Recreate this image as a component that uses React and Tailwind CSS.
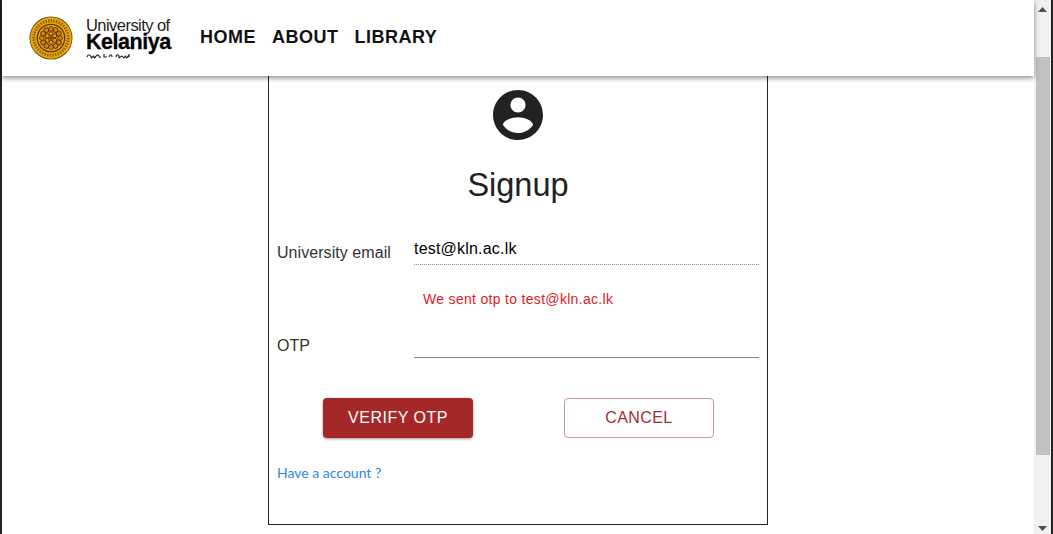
import React from 'react'

const Seal = () => (
  <svg width="44" height="44" viewBox="0 0 46 46">
    <circle cx="23" cy="23" r="22.5" fill="#6b4a08" />
    <circle cx="23" cy="23" r="21.6" fill="#e6a90f" />
    <circle cx="23" cy="23" r="18" fill="none" stroke="#8a5a08" strokeWidth="3.2" strokeDasharray="1.4 1.4" />
    <circle cx="23" cy="23" r="15" fill="#6e3208" />
    <circle cx="23" cy="23" r="13.6" fill="#e8ac18" />
    {[0, 30, 60, 90, 120, 150, 180, 210, 240, 270, 300, 330].map((a) => (
      <circle key={a} cx="23" cy="13.5" r="2.5" fill="#c9861a" stroke="#6e3208" strokeWidth="1" transform={`rotate(${a} 23 23)`} />
    ))}
    {[0, 60, 120, 180, 240, 300].map((a) => (
      <circle key={a} cx="23" cy="18.5" r="2" fill="#e8ac18" stroke="#6e3208" strokeWidth="1" transform={`rotate(${a} 23 23)`} />
    ))}
    <circle cx="23" cy="23" r="2.2" fill="#8a4a0c" />
  </svg>
)

const Logo = () => (
  <div className="flex items-center gap-[13px]">
    <Seal />
    <div className="flex flex-col w-[86px]">
      <span className="text-[16.5px] leading-[16px] tracking-[-0.55px] font-light text-[#222]">University of</span>
      <span className="text-[21.5px] leading-[18px] font-bold tracking-[-0.45px] text-black [-webkit-text-stroke:0.3px_black]">Kelaniya</span>
      {/* tiny script under the wordmark, part of the logo */}
      <svg width="48" height="7" viewBox="0 0 48 7" className="mt-[1px]">
        <path d="M1 5c1-3 3-3 4 0s2-3 3 0 2-3 4-2 1 3 3 2M18 2v3h3M23 5c1-3 3-3 3 0M30 5c0-3 3-3 3 0s2-3 4 0 2-3 3 0 2-3 3 0V2" fill="none" stroke="#222" strokeWidth="1.2" />
      </svg>
    </div>
  </div>
)

const Navbar = () => (
  <header className="relative z-10 h-[76px] shrink-0 bg-white flex items-center pl-[27px] shadow-[0_2px_5px_rgba(0,0,0,0.45)]">
    <Logo />
    <nav className="flex gap-[16px] ml-[28px] mb-[2px] text-[18px] font-bold tracking-[0.5px] text-[#111]">
      <a>HOME</a>
      <a>ABOUT</a>
      <a>LIBRARY</a>
    </nav>
  </header>
)

const Scrollbar = () => (
  <div className="w-[17px] shrink-0 bg-[#f1f1f1] flex flex-col items-center">
    <svg width="9" height="5" viewBox="0 0 9 5" className="mt-[7px]"><path d="M4.5 0 9 5H0z" fill="#505050" /></svg>
    <div className="w-[14px] h-[398px] mt-[45px] bg-[#c1c1c1]" />
    <svg width="9" height="5" viewBox="0 0 9 5" className="mt-auto mb-[3px]"><path d="M0 0h9L4.5 5z" fill="#505050" /></svg>
  </div>
)

export default function App() {
  return (
    <div className="flex h-[534px] w-[1053px] overflow-hidden bg-white font-['Liberation_Sans',Arial,sans-serif]">
      <div className="w-[2px] shrink-0 bg-[#222]" />
      <div className="flex-1 flex flex-col min-w-0">
        <Navbar />
        <main className="flex-1 flex justify-center">
          <div className="w-[500px] h-[449px] border-x border-b border-[#222] px-[8px] flex flex-col">
            <svg width="60" height="60" viewBox="0 0 24 24" className="self-center mt-[9px]" fill="#222">
              <path d="M12 2C6.48 2 2 6.48 2 12s4.48 10 10 10 10-4.48 10-10S17.52 2 12 2zm0 3c1.66 0 3 1.34 3 3s-1.34 3-3 3-3-1.34-3-3 1.34-3 3-3zm0 14.2c-2.5 0-4.71-1.28-6-3.22.03-1.99 4-3.08 6-3.08 1.99 0 5.97 1.09 6 3.08-1.29 1.94-3.5 3.22-6 3.22z" />
            </svg>
            <h1 className="self-center text-[32.5px] leading-[40px] text-[#212121] mt-[20px]">Signup</h1>

            <div className="flex mt-[34px]">
              <label className="w-[137px] pt-[4px] text-[16px] leading-[20px] tracking-[0.06px] text-[#333]">University email</label>
              <div className="w-[345px] h-[26px] border-b border-dotted border-[#888] text-[16px] leading-[20px] tracking-[0.2px] text-black">test@kln.ac.lk</div>
            </div>
            <p className="ml-[146px] mt-[26px] text-[14px] leading-[16px] tracking-[0.31px] text-[#e01b24]">We sent otp to test@kln.ac.lk</p>

            <div className="flex mt-[15px]">
              <label className="w-[137px] pt-[14px] text-[16px] leading-[20px] text-[#333]">OTP</label>
              <div className="w-[345px] h-[36px] border-b border-[#8a8a8a]" />
            </div>

            <div className="flex mt-[40px] ml-[46px] gap-[91px]">
              <button className="w-[150px] h-[40px] rounded-[4px] bg-[#a52828] text-white text-[16px] tracking-[0.5px] shadow-[0_1px_3px_rgba(0,0,0,0.4)]">VERIFY OTP</button>
              <button className="w-[150px] h-[40px] rounded-[4px] border border-[#c99a9a] bg-white text-[#a13030] text-[16px] tracking-[0.4px]">CANCEL</button>
            </div>

            <a className="mt-[27px] text-[14px] leading-[16px] text-[#2f86e0] font-['Lato',sans-serif]">Have a account ?</a>
          </div>
        </main>
      </div>
      <Scrollbar />
      <div className="w-[2px] shrink-0 bg-[#222]" />
    </div>
  )
}
